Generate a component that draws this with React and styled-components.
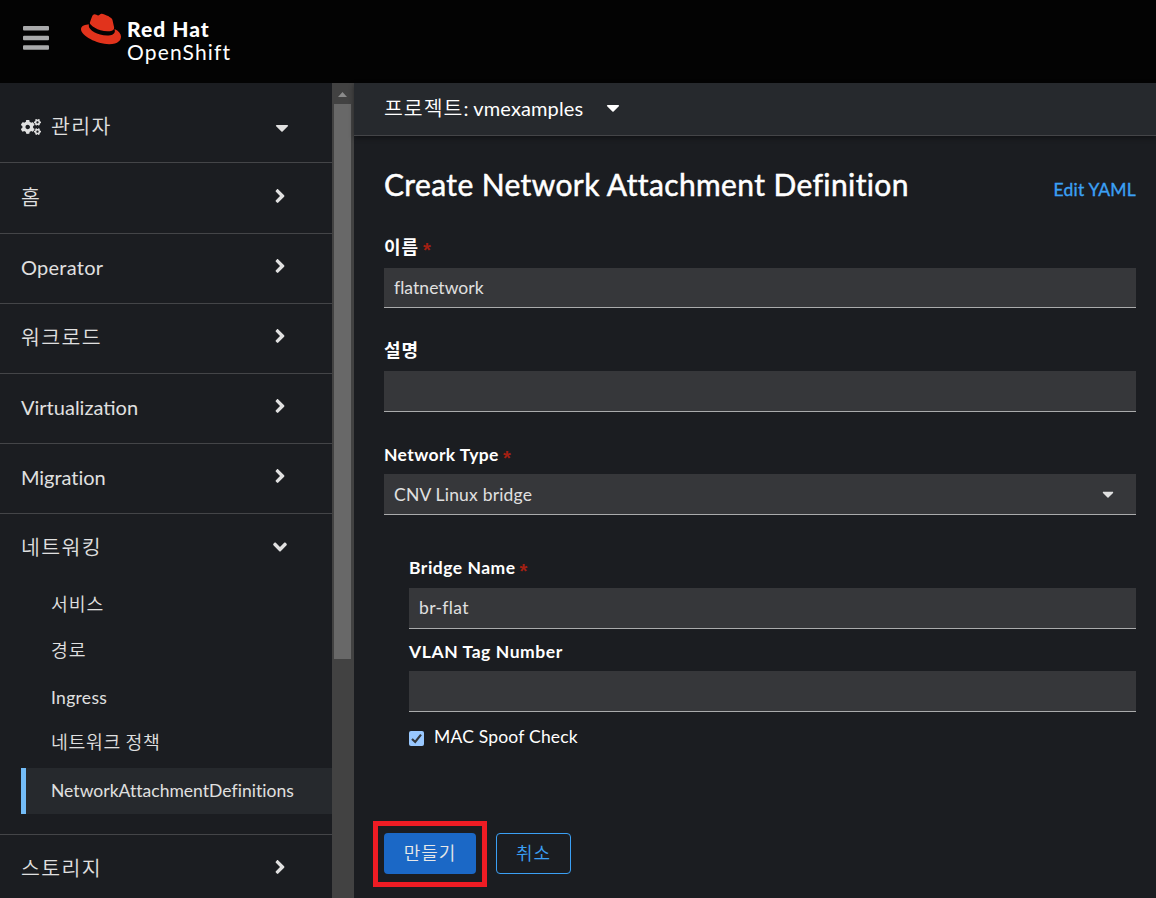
import React from "react";
import styled, { createGlobalStyle, css } from "styled-components";
import { FaCogs, FaAngleRight, FaAngleDown, FaCaretDown } from "react-icons/fa";
import { SiRedhat } from "react-icons/si";

const latin = `Lato, "Noto Sans CJK KR", sans-serif`;
const korean = `"Noto Sans CJK KR", sans-serif`;

const GlobalStyle = createGlobalStyle`
  * { box-sizing: border-box; }
  body {
    margin: 0;
    background: #1b1d21;
    color: #fff;
    font-family: ${latin};
    overflow: hidden;
  }
`;

const Page = styled.div`
  height: 898px;
  width: 1156px;
  display: flex;
  flex-direction: column;
  overflow: hidden;
`;

const Masthead = styled.header`
  height: 83px;
  flex: none;
  background: #030303;
  display: flex;
  align-items: flex-start;
`;

const MenuIcon = styled.svg`
  margin: 26px 0 0 23px;
  width: 26px;
  height: 24px;
  fill: #a9aaab;
`;

const Hat = styled(SiRedhat)`
  width: 40px;
  height: 40px;
  margin: 9px 0 0 32px;
  color: #e1331c;
`;

const Brand = styled.div`
  margin: 17px 0 0 6px;
  font-size: 21px;
  line-height: 23px;
`;

const BrandName = styled.div`
  font-weight: ${(p) => (p.$bold ? 900 : 400)};
  letter-spacing: ${(p) => p.$spacing}px;
`;

const Body = styled.div`
  flex: 1;
  display: flex;
  min-height: 0;
`;

const Sidebar = styled.nav`
  width: 332px;
  flex: none;
  color: #e0e0e0;
  overflow: hidden;
`;

const NavRow = styled.div`
  height: ${(p) => p.$height || 70}px;
  display: flex;
  align-items: center;
  padding: 0 40px 0 21px;
  border-bottom: ${(p) => (p.$open ? "none" : "1px solid #444548")};
  svg.arrow { margin: 0 1px 5px auto; width: 22px; height: 22px; }
  svg.caret { margin: 9px 3px 0 auto; width: 14px; height: 21px; }
  svg.gears { width: 20px; height: 16px; margin: 8px 10px 0 0; }
`;

const text = css`
  white-space: nowrap;
  font-size: ${(p) => p.$size || 20}px;
  font-weight: ${(p) => p.$weight || 400};
  letter-spacing: ${(p) => p.$spacing || 0}px;
  margin-top: ${(p) => p.$top || 0}px;
`;

const Latin = styled.span`
  ${text}
  font-family: ${latin};
  line-height: 24px;
`;

const Korean = styled.span`
  ${text}
  font-family: ${korean};
  line-height: 24px;
`;

const SubList = styled.div`
  padding-bottom: 20px;
  border-bottom: 1px solid #444548;
`;

const SubItem = styled.div`
  height: 46px;
  margin-left: 21px;
  padding-left: 25px;
  display: flex;
  align-items: center;
  border-left: 5px solid ${(p) => (p.$active ? "#73bcf7" : "transparent")};
  background: ${(p) => (p.$active ? "#26292d" : "transparent")};
`;

const Scrollbar = styled.div`
  width: 22px;
  flex: none;
  background: #424242;
  padding: 9px 3px 0 2px;
  display: flex;
  flex-direction: column;
`;

const ScrollArrow = styled.svg`
  width: 9px;
  height: 5px;
  margin: 0 0 7px 4px;
  fill: #8b8b8b;
`;

const ScrollThumb = styled.div`
  width: 17px;
  height: 555px;
  background: #686868;
`;

const Main = styled.main`
  flex: 1;
  min-width: 0;
`;

const ProjectBar = styled.div`
  height: 53px;
  background: #26292d;
  border-bottom: 1px solid #444548;
  box-shadow: 0 2px 5px rgba(0, 0, 0, 0.4);
  display: flex;
  align-items: center;
  padding-left: 30px;
  svg { margin: 0 0 3px 23px; width: 14px; height: 21px; }
`;

const Content = styled.div`
  padding: 0 20px 0 30px;
`;

const TitleRow = styled.div`
  height: 90px;
  display: flex;
  justify-content: space-between;
  align-items: center;
`;

const Title = styled.h1`
  margin: 6px 0 0;
  font-size: 30px;
  font-weight: 400;
  line-height: 36px;
  letter-spacing: 0.38px;
  -webkit-text-stroke: 0.5px currentColor;
`;

const Link = styled.a`
  margin-top: 17px;
  color: #3ba0f5;
  font-size: 17.5px;
  letter-spacing: 0.2px;
  -webkit-text-stroke: 0.35px currentColor;
`;

const Field = styled.div`
  margin-top: ${(p) => p.$gap || 0}px;
`;

const Label = styled.label`
  display: flex;
  align-items: center;
  height: ${(p) => p.$height}px;
`;

const Star = styled.span`
  color: #a32013;
  font-family: "Liberation Sans", sans-serif;
  font-size: 20px;
  font-weight: 700;
  line-height: 18px;
  margin: 5px 0 0 4px;
`;

const Input = styled.div`
  height: ${(p) => p.$height || 41}px;
  background: #36373a;
  border-bottom: 1px solid #aaabac;
  color: #e0e0e0;
  display: flex;
  align-items: center;
  padding: 0 22px 0 10px;
  svg { margin-left: auto; width: 12px; height: 18px; }
`;

const Nested = styled.div`
  padding-left: 25px;
`;

const CheckRow = styled.div`
  display: flex;
  align-items: center;
  margin-top: 13px;
  height: 24px;
`;

const Checkbox = styled.svg`
  width: 15px;
  height: 15px;
  margin: 3px 10px 0 0;
`;

const Actions = styled.div`
  display: flex;
  gap: 20px;
  margin-top: 84px;
`;

const Button = styled.button`
  position: relative;
  height: 41px;
  width: ${(p) => (p.$primary ? 92 : 75)}px;
  padding: 0 0 3px;
  border-radius: 4px;
  display: flex;
  justify-content: center;
  align-items: center;
  border: ${(p) => (p.$primary ? "none" : "1px solid #3ba0f5")};
  background: ${(p) => (p.$primary ? "#1b68c6" : "transparent")};
  color: ${(p) => (p.$primary ? "#e8e8e8" : "#3ba0f5")};
`;

const Highlight = styled.span`
  position: absolute;
  inset: -12px -11px -13px -11px;
  border: 5px solid #ee1c24;
`;

const Arrow = () => <FaAngleRight className="arrow" />;

const sections = [
  { label: "홈", ko: true, height: 71, top: -4 },
  { label: "Operator", spacing: 0.25 },
  { label: "워크로드", ko: true, top: -6 },
  { label: "Virtualization", spacing: 0 },
  { label: "Migration", spacing: -0.05 },
];

const networking = [
  { label: "서비스", ko: true },
  { label: "경로", ko: true },
  { label: "Ingress", spacing: 0.3, top: -2 },
  { label: "네트워크 정책", ko: true, spacing: 0.65 },
  { label: "NetworkAttachmentDefinitions", spacing: 0.03, active: true },
];

export default function App() {
  return (
    <Page>
      <GlobalStyle />
      <Masthead>
        <MenuIcon viewBox="0 0 26 24">
          <rect width="26" height="4.6" rx="1" />
          <rect y="9.7" width="26" height="4.6" rx="1" />
          <rect y="19.2" width="26" height="4.6" rx="1" />
        </MenuIcon>
        <Hat />
        <Brand>
          <BrandName $bold $spacing={1}>Red Hat</BrandName>
          <BrandName $spacing={1.15}>OpenShift</BrandName>
        </Brand>
      </Masthead>
      <Body>
        <Sidebar>
          <NavRow $height={80}>
            <FaCogs className="gears" />
            <Korean $size={20.5} $spacing={1.35} $weight={350} $top={4}>관리자</Korean>
            <FaCaretDown className="caret" />
          </NavRow>
          {sections.map((s) => (
            <NavRow key={s.label} $height={s.height}>
              {s.ko ? (
                <Korean $size={20.5} $spacing={1.35} $weight={350} $top={s.top}>{s.label}</Korean>
              ) : (
                <Latin $spacing={s.spacing} $top={-3}>{s.label}</Latin>
              )}
              <Arrow />
            </NavRow>
          ))}
          <NavRow $open>
            <Korean $size={20.5} $spacing={1.35} $weight={350} $top={-6}>네트워킹</Korean>
            <FaAngleDown className="arrow" />
          </NavRow>
          <SubList>
            {networking.map((s) => (
              <SubItem key={s.label} $active={s.active}>
                {s.ko ? (
                  <Korean $size={18.3} $spacing={s.spacing || 0.95} $weight={350} $top={-9}>{s.label}</Korean>
                ) : (
                  <Latin $size={17.5} $spacing={s.spacing} $top={s.top}>{s.label}</Latin>
                )}
              </SubItem>
            ))}
          </SubList>
          <NavRow>
            <Korean $size={20.5} $spacing={1.35} $weight={350} $top={-6}>스토리지</Korean>
            <Arrow />
          </NavRow>
        </Sidebar>
        <Scrollbar>
          <ScrollArrow viewBox="0 0 9 5"><path d="M4.5 0 9 5H0z" /></ScrollArrow>
          <ScrollThumb />
        </Scrollbar>
        <Main>
          <ProjectBar>
            <Korean $size={20.5} $spacing={1} $weight={350} $top={-4}>프로젝트</Korean>
            <Latin $spacing={0.12} $top={-2}>: vmexamples</Latin>
            <FaCaretDown />
          </ProjectBar>
          <Content>
            <TitleRow>
              <Title>Create Network Attachment Definition</Title>
              <Link>Edit YAML</Link>
            </TitleRow>
            <Field>
              <Label $height={42}>
                <Korean $size={18} $weight={700} $spacing={0.9} $top={-3}>이름</Korean>
                <Star>*</Star>
              </Label>
              <Input $height={40}><Latin $size={17.5} $spacing={0.05}>flatnetwork</Latin></Input>
            </Field>
            <Field $gap={19}>
              <Label $height={44}>
                <Korean $size={18} $weight={700} $spacing={0.9} $top={-1}>설명</Korean>
              </Label>
              <Input />
            </Field>
            <Field $gap={24}>
              <Label $height={38}>
                <Latin $size={17.5} $weight={700} $spacing={0.4}>Network Type</Latin>
                <Star>*</Star>
              </Label>
              <Input><Latin $size={17.5} $spacing={0.2} $top={1}>CNV Linux bridge</Latin><FaCaretDown /></Input>
            </Field>
            <Nested>
              <Field $gap={33}>
                <Label $height={40}>
                  <Latin $size={17.5} $weight={700} $spacing={0.5}>Bridge Name</Latin>
                  <Star>*</Star>
                </Label>
                <Input><Latin $size={17.5} $spacing={0.35}>br-flat</Latin></Input>
              </Field>
              <Field $gap={4}>
                <Label $height={38}>
                  <Latin $size={17.5} $weight={700} $spacing={0.58}>VLAN Tag Number</Latin>
                </Label>
                <Input />
              </Field>
              <CheckRow>
                <Checkbox viewBox="0 0 15 15">
                  <rect width="15" height="15" rx="2" fill="#99c8ff" />
                  <path d="M3 8l3.2 3L12 3.6" fill="none" stroke="#33373c" strokeWidth="2.2" />
                </Checkbox>
                <Latin $size={17.5} $spacing={0.2}>MAC Spoof Check</Latin>
              </CheckRow>
            </Nested>
            <Actions>
              <Button $primary>
                <Korean $size={18} $spacing={0.9} $weight={350}>만들기</Korean>
                <Highlight />
              </Button>
              <Button>
                <Korean $size={18} $spacing={0.9} $weight={350}>취소</Korean>
              </Button>
            </Actions>
          </Content>
        </Main>
      </Body>
    </Page>
  );
}
